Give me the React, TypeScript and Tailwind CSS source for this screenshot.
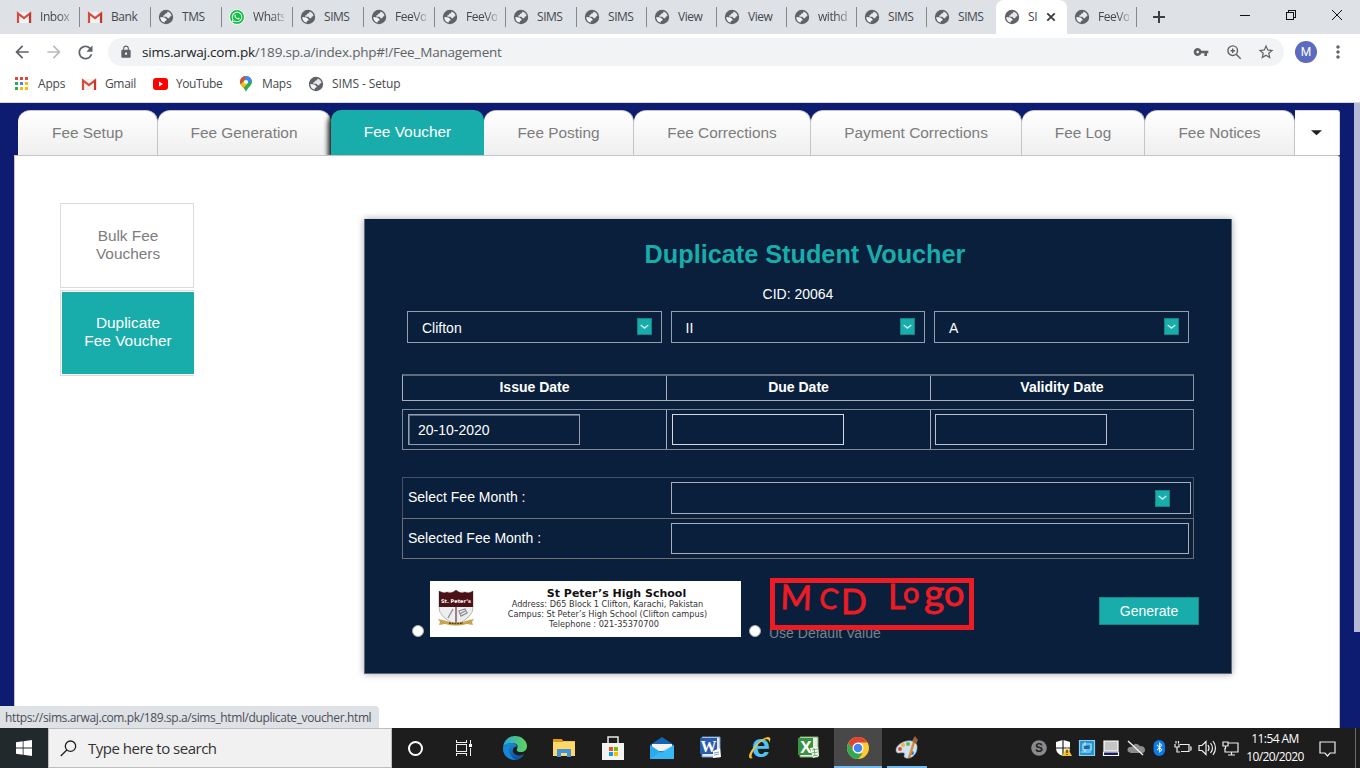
import React from "react";
import { MdLock, MdVpnKey, MdStarBorder, MdMoreVert, MdArrowBack, MdArrowForward, MdRefresh } from "react-icons/md";
import { FaWhatsapp, FaBluetoothB } from "react-icons/fa";

const ui = "font-['Open_Sans','Noto_Sans',sans-serif]";
const arial = "font-['Liberation_Sans',Arial,sans-serif]";

function Globe() {
  return (
    <svg width="16" height="16" viewBox="0 0 16 16" className="shrink-0">
      <circle cx="8" cy="8" r="7.200" fill="#5f6368" />
      <path d="M9.500 2.600 9 4.200 7.200 4.800 6.400 6.300 5.200 6.500 5.300 7.700 8.200 7.700 9.800 9.200 11.200 9.300 11.800 7.800 13.500 7A5.700 5.700 0 0 0 9.500 2.600Z" fill="#e6e8eb" />
      <path d="M2.300 8 6.400 8.400 8.600 10.200 8.400 11.400 6.800 12 6.800 13.600A5.700 5.700 0 0 1 2.300 8Z" fill="#f4f5f6" />
    </svg>
  );
}

function GmailIcon() {
  return (
    <svg width="16" height="16" viewBox="0 0 16 16" className="shrink-0">
      <path d="M2 3h12v11H2z" fill="#f2f2f2" />
      <path d="M2 14V4.500l6 4.700 6-4.700V14" fill="none" stroke="#d54b3d" strokeWidth="2.200" />
      <path d="M13 5.500 15.100 3.500V14H13z" fill="#c0392b" />
    </svg>
  );
}

function WhatsIcon() {
  return (
    <span className="flex size-4 shrink-0 items-center justify-center rounded-full border border-white bg-[#12c143] text-white">
      <FaWhatsapp size={12} />
    </span>
  );
}

const tabs = [
  { t: "Inbox", k: "g", w: "w-[71px]" },
  { t: "Bank", k: "g", w: "w-[71px]" },
  { t: "TMS", k: "s", w: "w-[71px]" },
  { t: "Whats", k: "w", w: "w-[71px]" },
  { t: "SIMS", k: "s", w: "w-[71px]" },
  { t: "FeeVo", k: "s", w: "w-[71px]" },
  { t: "FeeVo", k: "s", w: "w-[71px]" },
  { t: "SIMS", k: "s", w: "w-[71px]" },
  { t: "SIMS", k: "s", w: "w-[70px]" },
  { t: "View", k: "s", w: "w-[70px]" },
  { t: "View", k: "s", w: "w-[70px]" },
  { t: "withd", k: "s", w: "w-[70px]" },
  { t: "SIMS", k: "s", w: "w-[70px]" },
  { t: "SIMS", k: "s", w: "w-[69px]", last: true },
];

const fade = "[mask-image:linear-gradient(to_right,black_60%,rgba(0,0,0,0.3))]";

function TabStrip() {
  return (
    <div className="flex h-[34px] bg-[#dee1e6] pl-[9px]">
      {tabs.map((t, i) => (
        <div key={i} className={`flex shrink-0 items-center pl-[7px] ${t.w}`}>
          {t.k === "g" ? <GmailIcon /> : t.k === "w" ? <WhatsIcon /> : <Globe />}
          <span className={`ml-2 w-[31px] whitespace-nowrap text-[12px] leading-4 tracking-[-0.45px] text-[#45494d] ${t.t.length > 4 ? fade : ""}`}>{t.t}</span>
          {!t.last && <span className="ml-auto h-5 w-px bg-[#84878b]" />}
        </div>
      ))}
      <div className="flex w-[71px] shrink-0 items-center rounded-t-lg bg-white pl-[8px]">
        <Globe />
        <span className="ml-[8px] w-[11px] text-[12px] leading-4 tracking-[-0.3px] text-[#45494d]">SI</span>
        <svg width="10" height="10" viewBox="0 0 10 10" className="ml-[7px]"><path d="m1.300 1.300 7.400 7.400m0-7.400-7.400 7.400" stroke="#3c4043" strokeWidth="1.900" /></svg>
      </div>
      <div className="flex w-[70px] shrink-0 items-center pl-[7px]">
        <Globe />
        <span className={`ml-2 w-[31px] whitespace-nowrap text-[12px] leading-4 tracking-[-0.45px] text-[#45494d] ${fade}`}>FeeVo</span>
        <span className="ml-auto h-5 w-px bg-[#84878b]" />
      </div>
      <svg width="12" height="12" viewBox="0 0 12 12" className="mt-[11px] ml-4"><path d="M6 0v12M0 6h12" stroke="#3c4043" strokeWidth="2" /></svg>
      <div className="ml-auto flex h-[29px] items-center pr-[18px]">
        <svg width="102" height="12" viewBox="0 0 102 12" fill="none" stroke="#111" shapeRendering="crispEdges">
          <path d="M0 6.5h10M46.5 3.5h7v7h-7zM48.5 3V1.5h7v7H54" />
          <path d="m92 1 10 10m0-10L92 11" shapeRendering="auto" />
        </svg>
      </div>
    </div>
  );
}

function Toolbar() {
  return (
    <div className="flex h-9 items-center text-[#5f6368]">
      <MdArrowBack size={20} className="ml-3" />
      <MdArrowForward size={20} className="ml-3 text-[#b9bbbe]" />
      <MdRefresh size={21} className="ml-[11px]" />
      <div className="ml-3 flex h-7 w-[1176px] items-center rounded-full bg-[#f1f3f4] pl-[11px]">
        <MdLock size={14} />
        <span className="ml-[9px] text-[13.500px] leading-5 tracking-[-0.2px] whitespace-nowrap"><span className="text-[#202124]">sims.arwaj.com.pk</span>/189.sp.a/index.php#!/Fee_Management</span>
        <span className="ml-auto flex items-center pr-[9px]">
          <MdVpnKey size={16} className="mr-px" />
          <svg width="16" height="16" viewBox="0 0 16 16" fill="none" stroke="currentColor" strokeWidth="1.400" className="ml-4"><circle cx="6.700" cy="6.700" r="4.800" /><path d="m10.200 10.200 4.500 4.500M6.700 4.500v4.400M4.500 6.700h4.400" /></svg>
          <MdStarBorder size={18} className="ml-[15px]" />
        </span>
      </div>
      <span className="ml-[11px] flex size-[22px] items-center justify-center rounded-full bg-[#5c6bc0] font-['Roboto',sans-serif] text-[12px] text-white">M</span>
      <MdMoreVert size={20} className="ml-[11px]" />
    </div>
  );
}

const appDots = ["bg-[#ea4335]", "bg-[#ea4335]", "bg-[#ea4335]", "bg-[#34a853]", "bg-[#4285f4]", "bg-[#fbbc05]", "bg-[#34a853]", "bg-[#fbbc05]", "bg-[#fbbc05]"];

function Bookmarks() {
  return (
    <div className="flex h-[33px] items-center border-b border-[#d8dadd] pb-[5px] text-[12px] leading-4 text-[#45494d]">
      <span className="ml-[15px] grid grid-cols-3 gap-[2px]">{appDots.map((c, i) => <span key={i} className={`size-[3px] ${c}`} />)}</span>
      <span className="ml-[10px] w-[33px] tracking-[-0.2px]">Apps</span>
      <span className="ml-[10px]"><GmailIcon /></span>
      <span className="ml-2 w-[39px] tracking-[-0.35px]">Gmail</span>
      <svg width="15" height="12" viewBox="0 0 15 12" className="ml-[9px]"><rect width="15" height="12" rx="3" fill="#f00" /><path d="m6 3.5 4 2.5-4 2.5z" fill="#fff" /></svg>
      <span className="ml-[8px] w-[55px] tracking-[-0.45px]">YouTube</span>
      <svg width="12" height="16" viewBox="0 0 12 16" className="ml-[9px]">
        <clipPath id="pin"><path d="M6 0a6 6 0 0 1 6 6c0 4-4.500 5-6 10-1.500-5-6-6-6-10a6 6 0 0 1 6-6z" /></clipPath>
        <g clipPath="url(#pin)"><path d="M0 0h12v16H0z" fill="#34a853" /><path d="M0 0h7L0 9z" fill="#ea4335" /><path d="M4 0h8v5L7 7z" fill="#4285f4" /><path d="m0 9 4-4 3 3-5 6z" fill="#fbbc04" /></g>
        <circle cx="6" cy="6" r="2.100" fill="#fff" />
      </svg>
      <span className="ml-[10px] w-9 tracking-[-0.3px]">Maps</span>
      <span className="ml-[10px]"><Globe /></span>
      <span className="ml-2 tracking-[-0.1px]">SIMS - Setup</span>
    </div>
  );
}

const navItems = [
  { t: "Fee Setup", w: "w-[140px]" },
  { t: "Fee Generation", w: "w-[173px]" },
  { t: "Fee Voucher", w: "w-[153px]", active: true },
  { t: "Fee Posting", w: "w-[150px]" },
  { t: "Fee Corrections", w: "w-[177px]" },
  { t: "Payment Corrections", w: "w-[211px]" },
  { t: "Fee Log", w: "w-[123px]" },
  { t: "Fee Notices", w: "w-[150px]" },
];

function NavTabs() {
  return (
    <div className="flex h-[45px] pl-[18px] text-[15.4px] text-[#7d7d7d]">
      {navItems.map((n) =>
        n.active ? (
          <div key={n.t} className={`flex shrink-0 items-center justify-center rounded-t-[10px] bg-[#18adab] pb-[2px] text-white [box-shadow:-3px_3px_5px_#222] [clip-path:inset(0_0_0_-8px)] ${n.w}`}>{n.t}</div>
        ) : (
          <div key={n.t} className={`flex shrink-0 items-center justify-center rounded-t-[12px] border-t border-r border-[#c5c5c5] bg-linear-to-b from-white to-[#efefef] ${n.w}`}>{n.t}</div>
        )
      )}
      <div className="flex w-[45px] items-center justify-center rounded-tr-[3px] border-t border-r border-[#d8d8d8] bg-white">
        <svg width="11" height="6" viewBox="0 0 12 6" className="mr-px"><path d="M0 0h12L6 5.500z" fill="#222" /></svg>
      </div>
    </div>
  );
}

function Chevron() {
  return (
    <span className="flex h-[17px] w-[15px] items-center justify-center border border-[#108684] bg-[#18adab]">
      <svg width="9" height="6" viewBox="0 0 9 6" fill="none"><path d="m.7 1 3.800 3L8.300 1" stroke="#c8eeee" strokeWidth="1.500" /></svg>
    </span>
  );
}

function Select({ value }: { value: string }) {
  return (
    <div className="flex h-8 w-[254.500px] items-center justify-between border border-[#949dab] pr-[9px] pb-px pl-[14px]">
      <span className="pt-[4px]">{value}</span>
      <Chevron />
    </div>
  );
}

function Crest() {
  return (
    <svg width="36" height="36" viewBox="0 0 36 36" className="shrink-0">
      <path d="M1 1q5 3 8 1 5 2 9-2 4 4 9 2 4 2 8-1v17q0 9-17 17Q1 27 1 18z" fill="#eee" stroke="#777" strokeWidth=".5" />
      <path d="M1 1q5 3 8 1 5 2 9-2 4 4 9 2 4 2 8-1v16H1z" fill="#4b1117" />
      <text x="18" y="13" textAnchor="middle" fontSize="5" fontWeight="700" fill="#fff" fontFamily="DejaVu Sans">St. Peter’s</text>
      <path d="M18 17v16" stroke="#4b1117" strokeWidth="1" />
      <path d="m10 28 5-9M21 21l6-2 2 4-6 3zM22 24l5-3" fill="none" stroke="#8b8d98" strokeWidth="1.300" />
      <path d="m0 29 5 1q13 5 26 0l5-1-2 3 1 3-6-1q-11 3-22 0l-6 1 1-3z" fill="#c9a44e" />
      <path d="M11 33q7 1 14 0" stroke="#5c431b" strokeWidth="1.500" fill="none" strokeDasharray="2 .7" />
    </svg>
  );
}

function InkNote() {
  return (
    <svg width="194" height="42" viewBox="0 0 194 42" className="overflow-visible" fill="#ed1c24" stroke="#ed1c24" strokeWidth="0.800" fontFamily="Lato" fontSize="33">
      <text>
        <tspan x="5" y="26" rotate="2" fontSize="34">M</tspan>
        <tspan x="43" y="24" rotate="9" fontSize="28">C</tspan>
        <tspan x="66" y="31" fontSize="34">D </tspan>
        <tspan x="113" y="26" fontSize="34">L</tspan>
        <tspan x="128" y="20" fontSize="29">o</tspan>
        <tspan x="149" y="24" fontSize="39">g</tspan>
        <tspan x="169" y="23" fontSize="36">o</tspan>
      </text>
    </svg>
  );
}

function VoucherCard() {
  return (
    <div className="mt-[63px] ml-[170px] flex h-[455px] w-[868px] shrink-0 flex-col border-r border-b border-l border-[#5d687b] bg-[#091f3c] text-[14px] text-white shadow-[0_0_7px_rgba(0,0,0,0.35)]">
      <h1 className="mt-5 h-[30px] pl-[14px] text-center text-[25.250px] leading-[30px] font-bold text-[#18adab]">Duplicate Student Voucher</h1>
      <p className="mt-4 h-[18px] text-center leading-[18px]">CID: 20064</p>
      <div className="mt-2 ml-[42px] flex gap-[9px]">
        <Select value="Clifton" /><Select value="II" /><Select value="A" />
      </div>
      <div className="mt-[31px] ml-[37px] grid h-[27px] w-[792px] grid-cols-[264px_264px_262px] border border-t-2 border-[#a8afb9] border-t-[#5f6b7d] border-r-[#8b95a3] text-center leading-[22px] font-bold">
        <span className="border-r border-[#a8afb9]">Issue Date</span><span className="border-r border-[#a8afb9]">Due Date</span><span>Validity Date</span>
      </div>
      <div className="mt-2 ml-[37px] grid h-[41px] w-[792px] grid-cols-[264px_264px_262px] border border-[#7e899a]">
        <span className="border-r border-[#a8afb9] pt-1 pl-[5px]"><span className="flex h-[31px] w-[172px] items-center border border-[#949dab] pt-[2px] pl-[9px] shadow-[inset_1px_1px_0_#5b6779]">20-10-2020</span></span>
        <span className="border-r border-[#a8afb9] pt-1 pl-[5px]"><span className="flex h-[31px] w-[172px] border border-[#d5d9df]" /></span>
        <span className="pt-1 pl-[4px]"><span className="flex h-[31px] w-[172px] border border-[#bcc2cb]" /></span>
      </div>
      <div className="mt-[27px] ml-[37px] flex h-[41px] w-[792px] items-center border border-b-0 border-[#465367] leading-[18px]">
        <span className="w-[268px] pb-[2px] pl-[5px]">Select Fee Month :</span>
        <span className="flex h-[32px] w-[520px] items-center justify-end border border-[#a7aeb9] pr-5"><Chevron /></span>
      </div>
      <div className="ml-[37px] flex h-[41px] w-[792px] items-center border border-[#716f72] leading-[18px]">
        <span className="w-[268px] pb-[2px] pl-[5px]">Selected Fee Month :</span>
        <span className="h-[31px] w-[518px] border border-[#a7aeb9]" />
      </div>
      <div className="mt-[18px] ml-[47px] flex h-[70px] items-start">
        <span className="mt-[48px] size-3 rounded-full border border-[#aaa] bg-white" />
        <div className="mt-1 ml-[6px] flex h-[56px] w-[311px] bg-white pt-[9px] pl-2 text-black">
          <Crest />
          <div className="flex w-[267px] flex-col items-center font-['DejaVu_Sans',sans-serif] text-[8.200px] leading-[10px] whitespace-nowrap text-[#333]">
            <b className="mt-[-3px] ml-[18px] text-[11px] leading-[13px] text-[#111]">St Peter’s High School</b>
            <span className="mt-[-1px]">Address: D65 Block 1 Clifton, Karachi, Pakistan</span>
            <span>Campus: St Peter’s High School (Clifton campus)</span>
            <span className="mr-[7px]">Telephone : 021-35370700</span>
          </div>
        </div>
        <span className="mt-[48px] ml-2 size-3 rounded-full border border-[#aaa] bg-white" />
        <div className="relative ml-[9px] h-[70px] w-[205px]">
          <span className="absolute top-[48px] left-[-1px] leading-4 whitespace-nowrap text-[#7b8289]">Use Default Value</span>
          <div className="absolute top-[1px] left-0 h-[52px] w-[204px] border-5 border-[#ed1c24]"><InkNote /></div>
        </div>
        <span className="mt-5 ml-[124px] flex h-7 w-[100px] items-center justify-center border border-[#128987] bg-[#18adab]">Generate</span>
      </div>
    </div>
  );
}

function PageBody() {
  return (
    <div className={`relative flex h-[625px] bg-[#0d1c70] pt-[7px] ${arial}`}>
      <div className="flex w-[1340px] flex-col">
        <NavTabs />
        <div className="ml-[14px] flex h-[573px] rounded-tr-[3px] border-t border-r border-l border-[#c5c5c5] bg-white">
          <div className="mt-[47px] ml-[45px] w-[134px] text-center text-[15.4px] leading-[18px]">
            <div className="h-[85px] border border-[#dcdcdc] pt-[23px] pl-[2px] text-[#7d7d7d]">Bulk Fee<br />Vouchers</div>
            <div className="mt-[2px] h-[86px] border border-r-0 border-[#dcdcdc] p-px pr-0"><div className="h-[82px] bg-[#18adab] pt-[22px] text-white">Duplicate<br />Fee Voucher</div></div>
          </div>
          <VoucherCard />
        </div>
      </div>
      <div className="mt-[-7px] ml-auto h-[529px] w-[6px] bg-[#b5bad7]" />
      <div className={`absolute bottom-0 left-0 h-[22px] w-[379px] rounded-tr-[4px] bg-[#dee1e6] pl-[5px] text-[12px] leading-[23px] tracking-[-0.38px] whitespace-nowrap text-[#4b4f54] ${ui}`}>https://sims.arwaj.com.pk/189.sp.a/sims_html/duplicate_voucher.html</div>
    </div>
  );
}

function TaskIcon({ kind }: { kind: string }) {
  const p = { width: 24, height: 24, viewBox: "0 0 24 24" };
  switch (kind) {
    case "edge":
      return (
        <svg {...p}>
          <defs>
            <linearGradient id="eg" x1="0" x2="1"><stop stopColor="#2aa7df" /><stop offset="1" stopColor="#5fd657" /></linearGradient>
            <linearGradient id="eb" x1="0" y1="0" x2="0" y2="1"><stop stopColor="#1c86d8" /><stop offset="1" stopColor="#0c4fa0" /></linearGradient>
          </defs>
          <path d="M0 11C1 4 6 0 12 0c7 0 12 5 12 10 0 4-3 6-6 6s-5-1-4-3c2-4-1-6-5-6S1 9 0 11z" fill="url(#eg)" />
          <path d="M0 11c1-2 5-4 9-4 3 0 5 2 5 4-2-1-5 1-4 5 1 3 6 5 11 2-2 4-5 6-9 6C5 24 0 19 0 12z" fill="url(#eb)" />
          <path d="M10 8c-6 3-5 12 3 16C5 24 0 19 0 12c1-3 6-6 10-4z" fill="#1687d2" />
        </svg>
      );
    case "folder":
      return <svg {...p}><path d="M1 4h9l1 1h12v15H1z" fill="#f5c142" /><path d="M1 6h22v14H1z" fill="#ffd869" /><path d="M1 3h9l1 3H1z" fill="#dc9a19" /><path d="M5 21v-8h14v8h-4v-4H9v4z" fill="#3f94dc" /></svg>;
    case "store":
      return <svg {...p}><path d="M7 8V1h10v7" fill="none" stroke="#e8e8e8" strokeWidth="1.500" /><path d="M1 7h22v17H1z" fill="#f3f3f3" /><path d="M8 11h4v4H8z" fill="#f25022" /><path d="M13 11h4v4h-4z" fill="#7fba00" /><path d="M8 16h4v4H8z" fill="#00a4ef" /><path d="M13 16h4v4h-4z" fill="#ffb900" /></svg>;
    case "mail":
      return <svg {...p}><path d="M0 9 12 1l12 8v14H0z" fill="#1466b4" /><path d="M2 8h20v7H2z" fill="#f4f4f4" /><path d="m0 9 12 8 12-8v14H0z" fill="#2aabee" /><path d="m0 23 12-8 12-6v14z" fill="#45bff5" opacity=".6" /></svg>;
    case "word":
      return <svg {...p}><path d="M3 1h18v20H3z" fill="#dfe9f8" stroke="#6e94cb" /><path d="M1 2h17v16H1z" fill="#2a5db0" /><text x="9.500" y="16" textAnchor="middle" fontSize="16" fontWeight="700" fill="#fff" fontFamily="Liberation Serif">W</text><path d="m14 15 7-3 1 9-8 1z" fill="#fff" /><path d="m15 17 5-1m-5 3 5-1" stroke="#7a9bce" /></svg>;
    case "ie":
      return <svg {...p} overflow="visible"><text x="13" y="21" textAnchor="middle" fontSize="33" fontWeight="700" fill="#4fc4f4" fontFamily="Liberation Sans">e</text><path d="M5 22c-5 2-6-3 1-11S20-1 22 2c1 1 0 3-1 5 1-7-8-3-13 4-4 6-6 10-3 11z" fill="#f2c230" /></svg>;
    case "excel":
      return <svg {...p}><path d="M3 1h18v20H3z" fill="#e3f0df" stroke="#75ae70" /><path d="M1 2h15v17H1z" fill="#3b9341" /><text x="9" y="16.500" textAnchor="middle" fontSize="17" fontWeight="700" fill="#fff" fontFamily="Liberation Sans">X</text><path d="m13 12 8-1 1 9-6 2z" fill="#fff" /><path d="m15 14 6-1m-6 4 6-1m-5 4 5-1m-4-7 1 8" stroke="#69ac68" fill="none" /></svg>;
    case "chrome":
      return <svg {...p}><circle cx="12" cy="12" r="11" fill="#fbc934" /><path d="M2.500 6.500A11 11 0 0 1 21.500 6.500H12L7.200 14.800z" fill="#e24335" /><path d="M2.500 6.500 7.200 14.800 12 17.500h4.800L12 23A11 11 0 0 1 2.500 6.500z" fill="#33a852" /><circle cx="12" cy="12" r="5.500" fill="#fff" /><circle cx="12" cy="12" r="4.300" fill="#4285f4" /></svg>;
    default:
      return <svg {...p}><path d="M12 5c7-1 11 2 10 8-1 7-7 10-11 9-4-1 0-4-2-5-3-1-8 2-8-3 0-4 5-8 11-9z" fill="#cfe2ef" stroke="#8ba9bd" strokeWidth=".5" /><circle cx="5" cy="13" r="2" fill="#e34a37" /><circle cx="8" cy="9" r="2" fill="#f2b632" /><circle cx="13" cy="8" r="2" fill="#68b84b" /><circle cx="17" cy="17" r="2" fill="#3d7fc8" /><path d="m14 22 5-16" stroke="#d88a38" strokeWidth="2.500" /><path d="m17 5 3-5 3 4-2 4z" fill="#9b6440" /></svg>;
  }
}

const apps = ["edge", "folder", "store", "mail", "word", "ie", "excel", "chrome", "paint"];

function Tray() {
  return (
    <svg width="216" height="24" viewBox="0 0 216 24" fill="none" stroke="#eee" strokeWidth="1.200" className="shrink-0">
      <g stroke="none"><circle cx="12" cy="12" r="7.800" fill="#8a8a8a" /><text x="12" y="16.200" textAnchor="middle" fontSize="12" fontWeight="700" fill="#222" fontFamily="Liberation Sans">S</text></g>
      <path d="M36 4q4 1 7 2v6q0 6-7 8-7-2-7-8V6q3-1 7-2z" fill="#fff" stroke="none" /><path d="M36 4v16M29 12h14" stroke="#222" /><path d="m40 11 5 9H35z" fill="#fbc02d" stroke="none" /><path d="M40 14v3m0 1v1" stroke="#222" />
      <path d="M52.500 4.500h15v15h-15z" fill="#2492cf" stroke="#8cd0ef" /><path d="M56 14V8h8v6zM54 16h10M58 6v10" stroke="#bfe6fa" /><path d="M57 10h5v3h-5z" fill="#166baa" stroke="none" />
      <path d="M77 5h14v10H77z" fill="#c5c5c5" stroke="#fff" /><path d="M76.500 16h15v3.500h-15z" fill="#17206b" stroke="#fff" />
      <path d="M104 17q-5-1-3-5 2-2 4-1 3-6 8-1 5 0 5 4 0 3-3 3z" fill="#8c8c8c" stroke="none" /><path d="m101 5 15 14" strokeWidth="1.500" />
      <rect x="126.500" y="4" width="11.500" height="16" rx="5.700" fill="#0a7bea" stroke="none" /><g transform="translate(127 6)"><FaBluetoothB size={11} color="#fff" stroke="none" /></g>
      <path d="M153 8.500h9v7h-8M163 11h1v3h-1M148 8v3h4V8M149 7.500V5M151.500 7.500V5M150 11v5h3" />
      <path d="M172 9.500h3l4-4v13l-4-4h-3zM181 9q2 3 0 6M183.500 7q4 5 0 10M186 5q5 7 0 14" />
      <path d="M201 7h10v9h-13v-4M204.500 16v3M201 19h7M196 6h5v4h-5zM198.500 10v3" />
    </svg>
  );
}

function Taskbar() {
  return (
    <div className="flex h-10 items-center bg-[#1d1d1d] text-white">
      <div className="flex h-10 w-12 shrink-0 items-center justify-center bg-[#22292d]">
        <svg width="16" height="16" viewBox="0 0 16 16" fill="#fff"><path d="M0 2.300 6.700 1.300v6.300H0zM7.500 1.200 16 0v7.600H7.500zM0 8.400h6.700v6.300L0 13.700zM7.500 8.400H16V16l-8.500-1.200z" /></svg>
      </div>
      <div className="flex h-10 w-[344px] shrink-0 items-center border border-[#bdbdbd] bg-[#f1f1f1] pl-[11px] text-[#333]">
        <svg width="17" height="17" viewBox="0 0 17 17" fill="none" stroke="#222" strokeWidth="1.300"><circle cx="10.500" cy="6.200" r="5.200" /><path d="m6.800 10-6 6" /></svg>
        <span className="ml-[11px] text-[15px] leading-5 tracking-[-0.5px]">Type here to search</span>
      </div>
      <div className="flex w-12 shrink-0 justify-center pr-px"><span className="size-[15px] rounded-full border-2 border-white" /></div>
      <div className="flex w-[50px] shrink-0 pl-4">
        <svg width="17" height="16" viewBox="0 0 17 16" fill="none" stroke="#eee" shapeRendering="crispEdges"><path d="M.5 0v2.500h10V0M.5 4.500h10v7H.5zM.5 16v-2.500h10V16M14.500 0v4M14.500 8v8" /><path d="M13 4h3v3h-3z" fill="#fff" stroke="none" /></svg>
      </div>
      {apps.map((a) => (
        <div key={a} className={a === "chrome" ? "ml-px flex h-10 w-12 shrink-0 items-center justify-center border-b-2 border-[#76b9ed] bg-[#484848] pt-[2px]" : a === "paint" ? "relative flex h-10 w-[49px] shrink-0 items-center justify-center" : "flex h-10 w-[49px] shrink-0 items-center justify-center"}>
          <TaskIcon kind={a} />
          {a === "paint" && <span className="absolute bottom-0 left-[5px] h-[2px] w-10 bg-[#76b9ed]" />}
        </div>
      ))}
      <div className="ml-auto flex h-10 items-center">
        <Tray />
        <div className="w-[64px] text-center text-[12px] leading-[18px] tracking-[-0.6px] whitespace-nowrap">11:54 AM<br />10/20/2020</div>
        <svg width="17" height="17" viewBox="0 0 17 17" className="ml-[12px] shrink-0" fill="none" stroke="#eee" strokeWidth="1.200"><path d="M1 2h15v11h-5l-2.500 3L6 13H1z" /></svg>
        <span className="mr-1 ml-[19px] h-10 w-px bg-[#6b6b6b]" />
      </div>
    </div>
  );
}

export default function App() {
  return (
    <div className={`h-[768px] w-[1360px] overflow-hidden bg-white ${ui}`}>
      <TabStrip />
      <Toolbar />
      <Bookmarks />
      <PageBody />
      <Taskbar />
    </div>
  );
}
